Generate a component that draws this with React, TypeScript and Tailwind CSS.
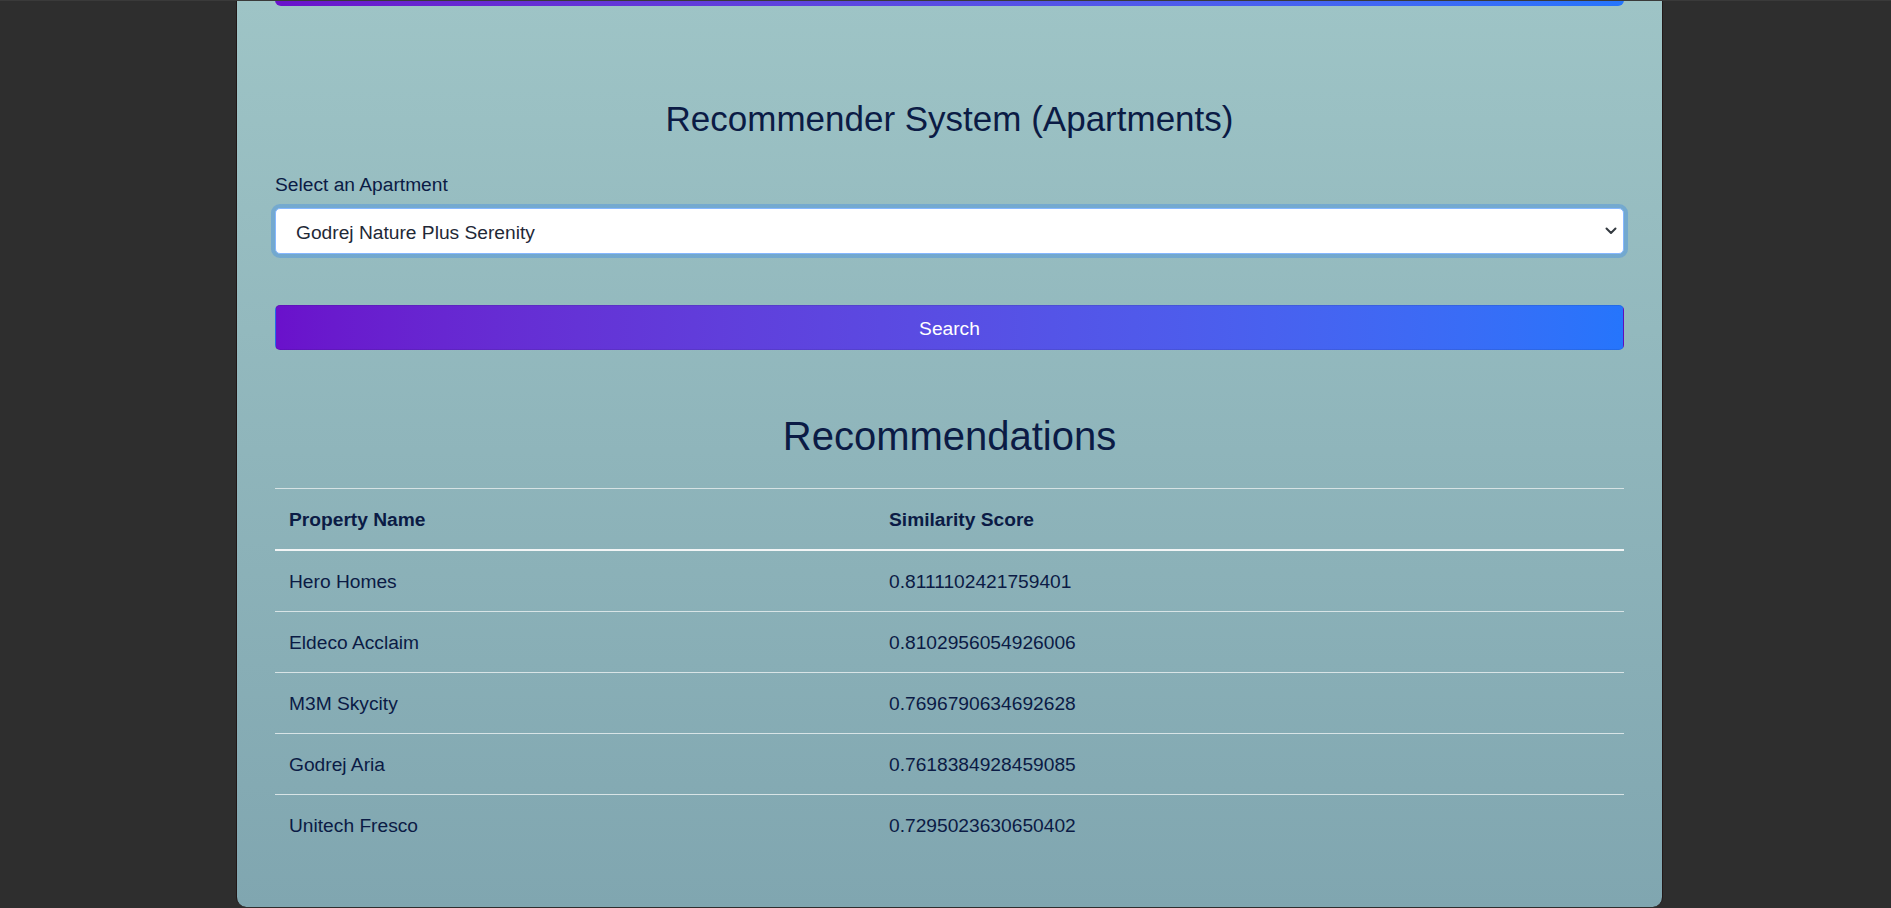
import React from "react";

const rows: [string, string][] = [
  ["Hero Homes", "0.8111102421759401"],
  ["Eldeco Acclaim", "0.8102956054926006"],
  ["M3M Skycity", "0.7696790634692628"],
  ["Godrej Aria", "0.7618384928459085"],
  ["Unitech Fresco", "0.7295023630650402"],
];

export default function App() {
  return (
    <div
      className="w-full h-[908px] overflow-hidden bg-[#2e2e2e] border-t border-[#3a3a3a]"
      style={{ fontFamily: '"Liberation Sans", Arial, sans-serif' }}
    >
      <div className="ml-[236px] w-[1427px] h-[907px] -mt-px border-x border-[#221818] rounded-b-[10px] bg-gradient-to-b from-[#9ec4c6] to-[#80a6b0] px-[38px] text-[#0b1b45]">
        <div className="h-[6px] rounded-b-[6px] bg-gradient-to-r from-[#6a11cb] to-[#2575fc]" />

        <h2 className="mt-[92px] text-center text-[35px] leading-[42px] font-normal">
          Recommender System (Apartments)
        </h2>

        <label className="block mt-[30px] mb-[9px] text-[19.2px] leading-[29px]">
          Select an Apartment
        </label>
        <div className="relative">
          <select
            className="w-full h-[46px] appearance-none bg-white border border-[#86b7fe] rounded-[5px] pl-[20px] pr-[40px] pt-[5px] text-[19.2px] text-[#1f2937] shadow-[0_0_0_4px_rgba(13,110,253,0.25)] outline-none"
            defaultValue="Godrej Nature Plus Serenity"
          >
            <option>Godrej Nature Plus Serenity</option>
          </select>
          <svg
            className="absolute right-[5px] top-[17px] pointer-events-none"
            width="16"
            height="12"
            viewBox="0 2 16 12"
            fill="none"
            stroke="#343a40"
            strokeWidth="2"
            strokeLinecap="round"
            strokeLinejoin="round"
          >
            <path d="M3.5 5.5l4.5 4.5 4.5-4.5" />
          </svg>
        </div>

        <button className="mt-[51px] w-full h-[45px] rounded-[5px] border border-[rgba(0,0,0,0.08)] bg-gradient-to-r from-[#6a11cb] to-[#2575fc] text-white text-[19.2px] pt-[3px]">
          Search
        </button>

        <h1 className="mt-[62px] text-center text-[40px] leading-[48px] font-normal">
          Recommendations
        </h1>

        <table className="mt-[28px] w-full border-separate border-spacing-0 text-[19.2px]">
          <thead>
            <tr>
              <th className="w-[602px] text-left font-bold pl-[14px] pr-[12px] pt-[17px] pb-[15px] leading-[28px] border-t border-b-2 border-t-[#d6e2e4] border-b-[#f2f5f6]">
                Property Name
              </th>
              <th className="text-left font-bold px-[12px] pt-[17px] pb-[15px] leading-[28px] border-t border-b-2 border-t-[#d6e2e4] border-b-[#f2f5f6]">
                Similarity Score
              </th>
            </tr>
          </thead>
          <tbody>
            {rows.map(([name, score], i) => {
              const last = i === rows.length - 1;
              return (
                <tr key={name}>
                  <td
                    className={
                      last
                        ? "pl-[14px] pr-[12px] pt-[17px] pb-[15px] leading-[28px]"
                        : "pl-[14px] pr-[12px] pt-[17px] pb-[15px] leading-[28px] border-b border-[#d8e4e6]"
                    }
                  >
                    {name}
                  </td>
                  <td
                    className={
                      last
                        ? "px-[12px] pt-[17px] pb-[15px] leading-[28px]"
                        : "px-[12px] pt-[17px] pb-[15px] leading-[28px] border-b border-[#d8e4e6]"
                    }
                  >
                    {score}
                  </td>
                </tr>
              );
            })}
          </tbody>
        </table>
      </div>
    </div>
  );
}
